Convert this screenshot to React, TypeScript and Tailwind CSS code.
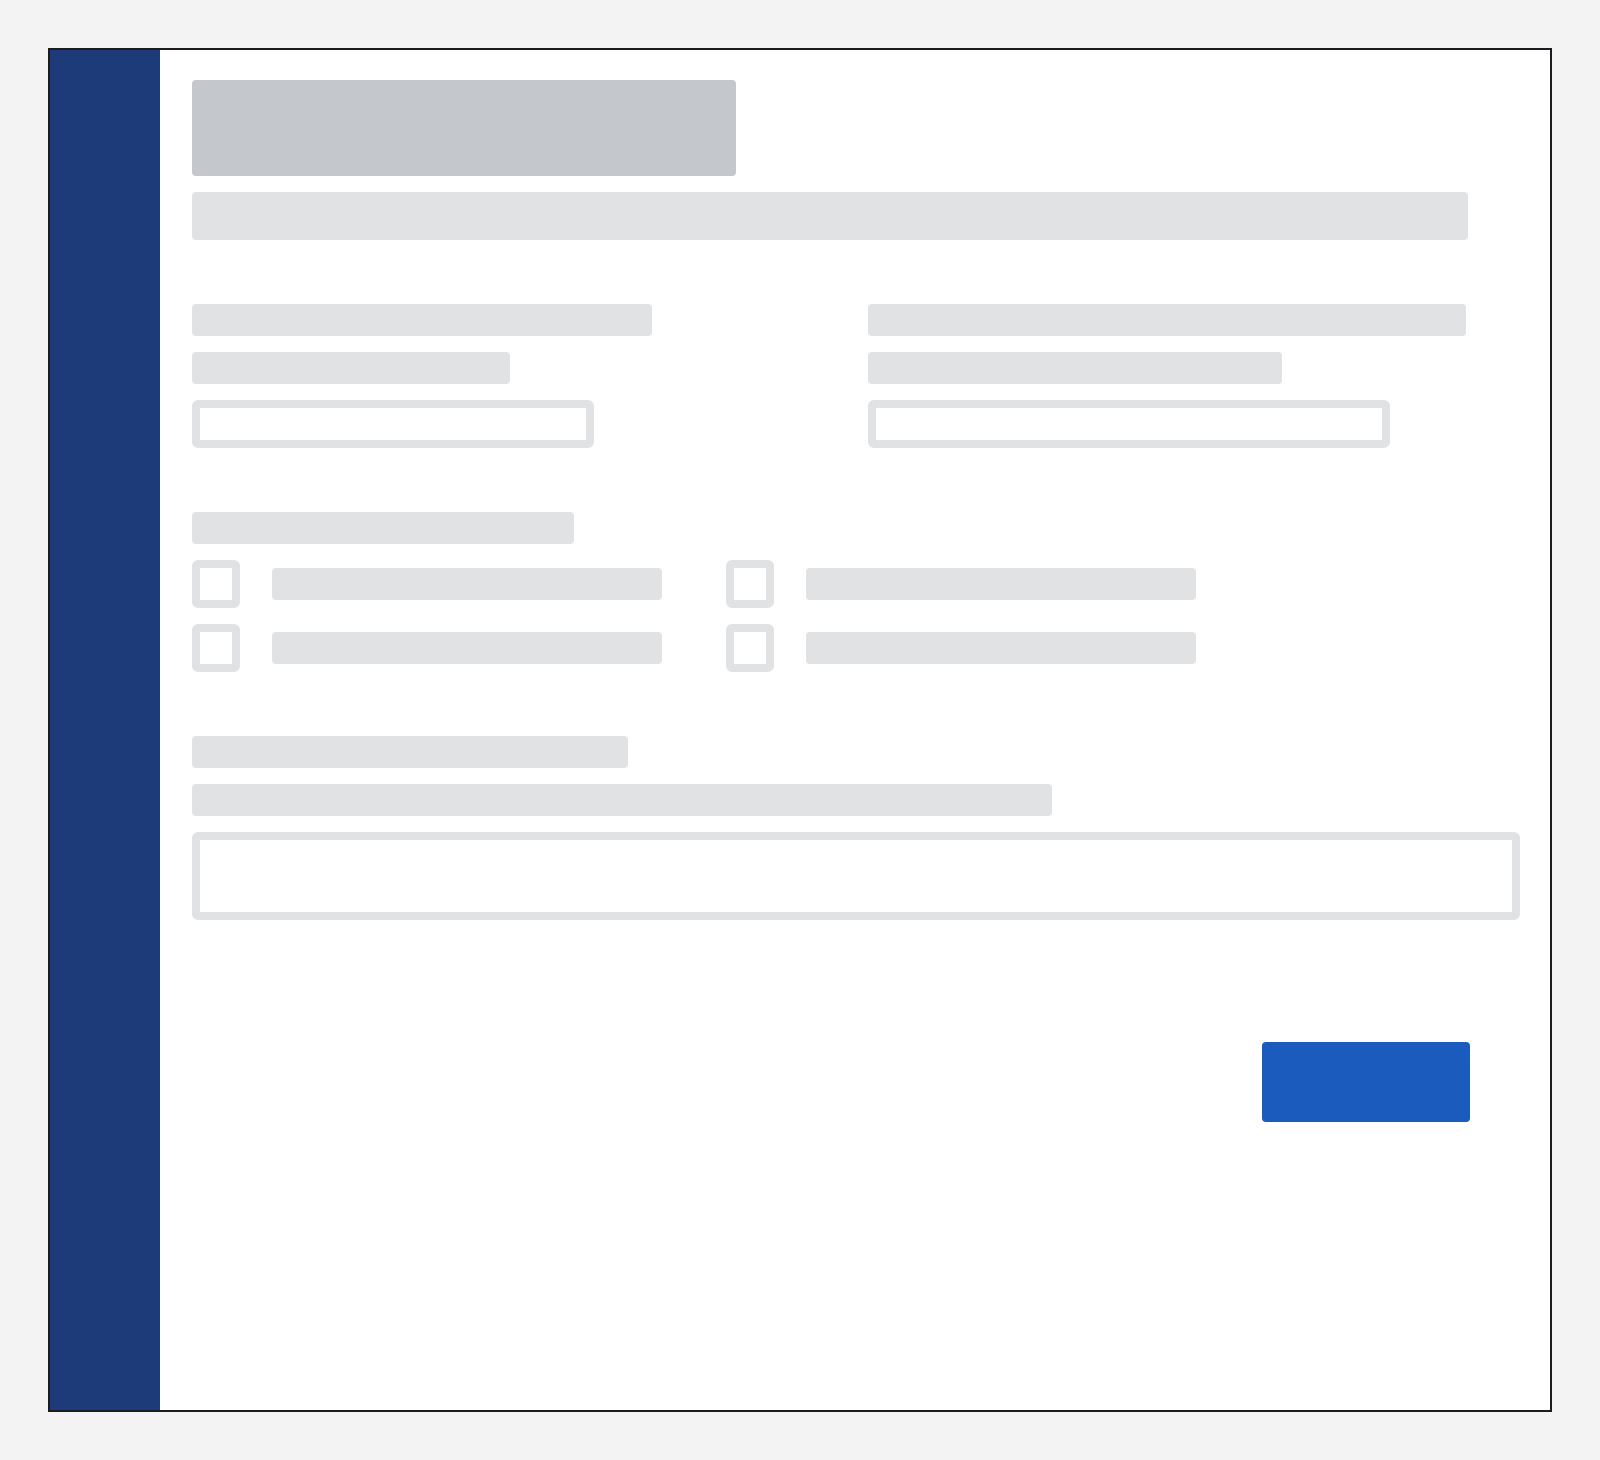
import React from 'react';

function Bar({ className }: { className: string }) {
  return <div className={`h-8 rounded bg-[#e1e2e4] ${className}`} />;
}

function Field({ className }: { className: string }) {
  return <div className={`h-12 rounded-md border-8 border-[#e1e2e4] bg-white ${className}`} />;
}

function CheckItem({ label }: { label: string }) {
  return (
    <div className="flex items-center gap-8">
      <div className="h-12 w-12 shrink-0 rounded-md border-8 border-[#e1e2e4] bg-white" />
      <div className={`h-8 rounded bg-[#e1e2e4] ${label}`} />
    </div>
  );
}

export default function App() {
  return (
    <div className="min-h-[1460px] bg-[#f3f3f3] p-12">
      <div className="flex h-[1364px] border-2 border-[#1c1c20] bg-white">
        {/* sidebar */}
        <div className="w-[110px] shrink-0 bg-[#1d3b78]" />

        {/* main form */}
        <div className="flex flex-1 flex-col pl-8 pr-[30px] pt-[30px]">
          <div className="h-24 w-[544px] rounded bg-[#c4c7cc]" />
          <div className="mt-4 h-12 w-[1276px] rounded bg-[#e1e2e4]" />

          <div className="mt-16 grid grid-cols-2 gap-x-6">
            <div className="flex flex-col gap-4">
              <Bar className="w-[460px]" />
              <Bar className="w-[318px]" />
              <Field className="w-[402px]" />
            </div>
            <div className="flex flex-col gap-4">
              <Bar className="w-[598px]" />
              <Bar className="w-[414px]" />
              <Field className="w-[522px]" />
            </div>
          </div>

          <div className="mt-16 flex flex-col gap-4">
            <Bar className="w-[382px]" />
            <div className="grid grid-cols-[470px_470px] gap-x-16 gap-y-4">
              <CheckItem label="w-[390px]" />
              <CheckItem label="w-[390px]" />
              <CheckItem label="w-[390px]" />
              <CheckItem label="w-[390px]" />
            </div>
          </div>

          <div className="mt-16 flex flex-col gap-4">
            <Bar className="w-[436px]" />
            <Bar className="w-[860px]" />
            <div className="h-[88px] w-full rounded-md border-8 border-[#e1e2e4] bg-white" />
          </div>

          <div className="mt-[122px] flex justify-end pr-[50px]">
            <button className="h-20 w-[208px] rounded bg-[#1a5bbd]" />
          </div>
        </div>
      </div>
    </div>
  );
}
